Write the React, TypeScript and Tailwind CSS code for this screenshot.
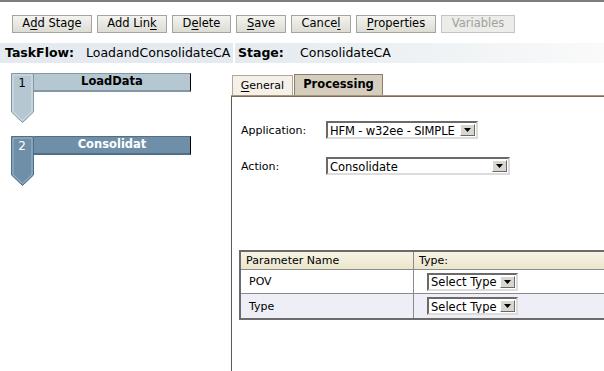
import React from "react";

const F = { fontFamily: '"DejaVu Sans", Verdana, sans-serif' } as const;

function Btn({ label, u, disabled }: { label: string; u: number; disabled?: boolean }) {
  const a = label.slice(0, u);
  const b = label.slice(u, u + 1);
  const c = label.slice(u + 1);
  return (
    <div
      className={`h-[18px] flex items-center justify-center border text-[11.5px] leading-none ${
        disabled
          ? "border-[#c4c4c4] bg-[#ecece8] text-[#a0a0a0]"
          : "border-[#a4a4a0] bg-gradient-to-b from-[#f4f4f0] to-[#dcdcd4] text-black"
      }`}
    >
      {disabled ? (
        label
      ) : (
        <>
          {a}
          <span className="underline underline-offset-2">{b}</span>
          {c}
        </>
      )}
    </div>
  );
}

function Stage({ n, name, dark }: { n: string; name: string; dark?: boolean }) {
  const fill = dark ? "#6f8fa9" : "#b5c7d1";
  const edge = dark ? "#4f6f88" : "#8397a7";
  const hi = dark ? "#9fb6c8" : "#d6e0e6";
  return (
    <div className="flex items-start">
      <div className="relative w-[23px] h-[50px] shrink-0">
        <svg width="23" height="50" viewBox="0 0 23 50" className="absolute inset-0">
          <polygon points="0.5,0.5 22.5,0.5 22.5,39 11.5,49.5 0.5,39" fill={fill} stroke={edge} />
          <polyline points="2,2 21,2 21,38.5 11.5,47.5 2,38.5 2,2" fill="none" stroke={hi} />
        </svg>
        <div
          className={`absolute left-0 top-[4px] w-[22px] text-center text-[12px] leading-none ${
            dark ? "text-white" : "text-black"
          }`}
        >
          {n}
        </div>
      </div>
      <div
        className={`w-[157px] h-[19px] flex items-center justify-center border-t border-b-2 border-r border-r-black font-bold text-[11.5px] leading-none ${
          dark ? "text-white" : "text-black"
        }`}
        style={{ background: fill, borderTopColor: edge, borderBottomColor: edge }}
      >
        {name}
      </div>
    </div>
  );
}

function Select({ text, w, tight }: { text: string; w: string; tight?: boolean }) {
  return (
    <div
      className={`${w} h-[18px] shrink-0 flex items-stretch bg-white border-2 border-t-[#6a6a6a] border-l-[#6a6a6a] border-r-[#dcdcdc] border-b-[#dcdcdc]`}
    >
      <div
        className={`flex-1 flex items-center pl-[2px] pt-[1px] text-[11.5px] leading-[14px] text-black whitespace-nowrap overflow-hidden ${
          tight ? "tracking-[-0.15px]" : ""
        }`}
      >
        {text}
      </div>
      <div className="w-[15px] my-[1px] mr-[1px] bg-[#d8d6ce] border border-t-white border-l-white border-r-[#6a6a6a] border-b-[#6a6a6a] flex items-center justify-center">
        <svg width="7" height="4" viewBox="0 0 7 4">
          <polygon points="0,0 7,0 3.5,4" fill="#000" />
        </svg>
      </div>
    </div>
  );
}

export default function App() {
  return (
    <div className="w-[604px] h-[371px] bg-white overflow-hidden border-t-2 border-[#7d7d7d] flex flex-col" style={F}>
      <div className="flex pt-[13px] pl-[12px] gap-[5px]">
        <div className="w-[80px]"><Btn label="Add Stage" u={1} /></div>
        <div className="w-[70px]"><Btn label="Add Link" u={7} /></div>
        <div className="w-[59px]"><Btn label="Delete" u={1} /></div>
        <div className="w-[50px]"><Btn label="Save" u={0} /></div>
        <div className="w-[60px]"><Btn label="Cancel" u={5} /></div>
        <div className="w-[80px]"><Btn label="Properties" u={0} /></div>
        <div className="w-[74px]"><Btn label="Variables" u={0} disabled /></div>
      </div>

      <div className="flex mt-[10px] h-[20px] text-[12.5px] leading-none text-black">
        <div className="w-[233px] bg-[#e4eaef] flex items-center pl-[5px]">
          <span className="font-bold w-[81px]">TaskFlow:</span>
          <span>LoadandConsolidateCA</span>
        </div>
        <div className="flex-1 ml-[2px] bg-gradient-to-r from-[#e4eaef] via-[#eef2f4] to-[#fafafa] flex items-center pl-[3px]">
          <span className="font-bold w-[62px]">Stage:</span>
          <span>ConsolidateCA</span>
        </div>
      </div>

      <div className="flex flex-1 min-h-0">
        <div className="w-[231px] shrink-0 flex flex-col gap-[13px] pt-[10px] pl-[11px]">
          <Stage n="1" name="LoadData" />
          <Stage n="2" name="Consolidat" dark />
        </div>

        <div className="flex-1 min-w-0 overflow-hidden flex flex-col pt-[10px]">
          <div className="flex items-end pl-[1px] h-[22px]">
            <div className="w-[61px] h-[20px] bg-[#f5f0ea] border border-b-0 border-[#b0a898] flex items-center justify-center text-[11px] leading-none text-black">
              <span className="underline underline-offset-2">G</span>eneral
            </div>
            <div className="w-[89px] h-[21px] ml-[1px] bg-[#d5cebf] border border-b-0 border-[#8a7e68] flex items-center justify-center font-bold text-[11.5px] leading-none text-black">
              Processing
            </div>
            <div className="flex-1" />
          </div>
          <div className="h-[2px] bg-[#a89878] border-b border-[#7a6a50]" />
          <div className="flex-1 border-l border-[#5a5a5a] flex flex-col">
            <div className="flex items-center mt-[24px] pl-[9px] h-[18px]">
              <span className="w-[85px] shrink-0 text-[11px] leading-none text-black">Application:</span>
              <Select text="HFM - w32ee - SIMPLE" w="w-[152px]" tight />
            </div>
            <div className="flex items-center mt-[18px] pl-[9px] h-[18px]">
              <span className="w-[85px] shrink-0 text-[11px] leading-none text-black">Action:</span>
              <Select text="Consolidate" w="w-[184px]" />
            </div>

            <div className="mt-[75px] ml-[7px] w-[380px] shrink-0 border-2 border-[#6b6b6b] text-[11px] leading-none text-black">
              <div className="flex h-[18px] bg-gradient-to-b from-[#f6f3e4] to-[#ebe6cc] border-b border-[#8a8a8a]">
                <div className="w-[173px] border-r border-[#8a8a8a] flex items-center pl-[5px]">Parameter Name</div>
                <div className="flex-1 flex items-center pl-[5px]">Type:</div>
              </div>
              <div className="flex h-[24px] bg-white border-b border-[#8a8a8a]">
                <div className="w-[173px] border-r border-[#8a8a8a] flex items-center pl-[8px]">POV</div>
                <div className="flex-1 flex items-center pl-[13px]">
                  <Select text="Select Type" w="w-[91px]" />
                </div>
              </div>
              <div className="flex h-[24px] bg-[#eeeef6]">
                <div className="w-[173px] border-r border-[#8a8a8a] flex items-center pl-[8px]">Type</div>
                <div className="flex-1 flex items-center pl-[13px]">
                  <Select text="Select Type" w="w-[91px]" />
                </div>
              </div>
            </div>
          </div>
        </div>
      </div>
    </div>
  );
}
